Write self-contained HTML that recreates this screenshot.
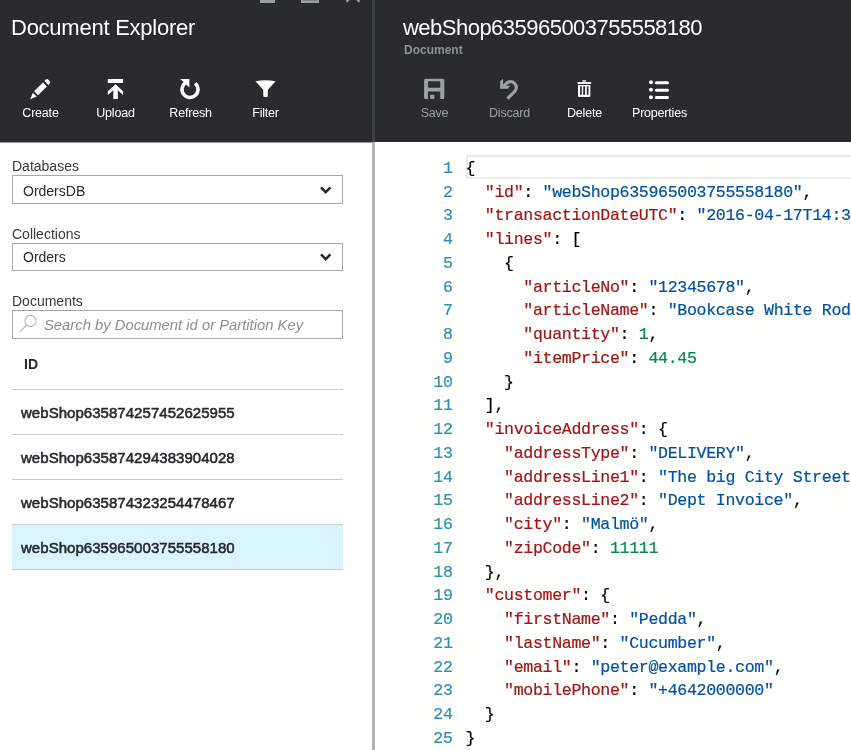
<!DOCTYPE html>
<html><head><meta charset="utf-8">
<style>
*{margin:0;padding:0;box-sizing:border-box}
html,body{width:851px;height:750px;overflow:hidden;background:#fff;font-family:"Liberation Sans",sans-serif}
.abs,.lbl,.rowt,#code{will-change:transform}
.abs{position:absolute;white-space:nowrap}
#hdr{position:absolute;left:0;top:0;width:851px;height:142px;background:#282c30;box-shadow:0 1px 0 #9a9a9a}
#div1{position:absolute;left:372px;top:0;width:3px;height:142px;background:#3c4147}
#div2{position:absolute;left:372px;top:142px;width:3px;height:608px;background:#b3b3b3}
.title{font-size:22px;line-height:22px;color:#fff}
.tb{position:absolute;top:0;width:75px;height:142px}
.tb svg{position:absolute;left:0;top:0}
.lbl{position:absolute;top:107.2px;left:0;width:75px;text-align:center;font-size:12.5px;line-height:12.5px;color:#fff;letter-spacing:-0.2px}
.dis{color:#9ca0a4}
.flabel{font-size:14px;line-height:14px;color:#3b3b3b}
.box{position:absolute;left:12px;width:331px;border:1px solid #a9a9a9;background:#fff}
.row{position:absolute;left:12px;width:331px;height:46px;border-top:1px solid #cbcbcb;border-bottom:1px solid #cbcbcb}
.rowt{position:absolute;left:9px;top:14.7px;font-size:15px;line-height:15px;color:#262a2f;letter-spacing:0.04px;-webkit-text-stroke:0.55px #262a2f}
#code{position:absolute;left:0;top:155px;width:851px}
.ln{position:relative;height:23.75px;font-family:"Liberation Mono",monospace;font-size:16.6px;line-height:23.75px;white-space:pre;letter-spacing:-0.33px;-webkit-text-stroke:0.2px currentColor}
.num{position:absolute;left:372.6px;width:80px;text-align:right;color:#2b91af;top:1.8px}
.txt{position:absolute;left:465.5px;top:1.8px;color:#000}
.k{color:#a31515}.s{color:#0451a5}.n{color:#098658}
#cur{position:absolute;left:466px;top:155px;width:400px;height:24px;border:2px solid #ebebeb;border-right:none;background:#fffffe}
</style></head><body>
<div id="hdr"></div>
<div id="div1"></div>
<div id="div2"></div>
<div style="position:absolute;left:375px;top:142px;width:476px;height:608px;background:#fffffe"></div>

<!-- window buttons -->
<div class="abs" style="left:260px;top:0;width:15px;height:3px;background:#9a9fa3"></div>
<div class="abs" style="left:301px;top:-12px;width:18px;height:15px;border:2px solid #9a9fa3;border-width:0 2px 2px 2px;background:#7e8388"></div>
<svg class="abs" style="left:340px;top:0" width="26" height="6"><path d="M13 -5 L6.5 1.8 M13 -5 L19.5 1.8" stroke="#9a9fa3" stroke-width="2.2" fill="none"/></svg>

<div class="abs title" style="left:11px;top:16.9px;letter-spacing:-0.25px">Document Explorer</div>

<!-- left toolbar -->
<div class="tb" style="left:3px">
  <svg width="75" height="142" viewBox="3 0 75 142">
    <g transform="translate(30.2 99.2) rotate(-45)" fill="#fff">
      <polygon points="0,0 6.5,-2.78 6.5,2.78"/>
      <rect x="8.3" y="-2.78" width="12.5" height="5.56"/>
      <path d="M22.8,-2.78 H25 A1.5 1.5 0 0 1 26.5 -1.28 V1.28 A1.5 1.5 0 0 1 25 2.78 H22.8 Z"/>
    </g>
  </svg>
  <div class="lbl">Create</div>
</div>
<div class="tb" style="left:78px">
  <svg width="75" height="142" viewBox="78 0 75 142">
    <rect x="107.8" y="79" width="15.3" height="4" fill="#fff"/>
    <polygon fill="#fff" points="115.5,84.2 123.1,91.2 123.1,95.1 117.8,90.2 117.8,98.9 113.3,98.9 113.3,90.2 107.8,95.1 107.8,91.2"/>
  </svg>
  <div class="lbl">Upload</div>
</div>
<div class="tb" style="left:153px">
  <svg width="75" height="142" viewBox="153 0 75 142">
    <path d="M195.14 83.37 A8 8 0 1 1 186 82.57" stroke="#fff" stroke-width="3.5" fill="none"/>
    <polygon fill="#fff" points="180.2,79 189.4,79 189.4,87.6"/>
  </svg>
  <div class="lbl">Refresh</div>
</div>
<div class="tb" style="left:228px">
  <svg width="75" height="142" viewBox="228 0 75 142">
    <path fill="#fff" d="M255.4 81.2 Q265.5 79.4 275.6 81.2 L268.6 89 Q267.8 89.8 267.8 90.8 V96.2 Q267.8 97 267 97 H264.1 Q263.3 97 263.3 96.2 V90.8 Q263.3 89.8 262.5 89 Z"/>
  </svg>
  <div class="lbl">Filter</div>
</div>

<!-- right header -->
<div class="abs title" style="left:403px;top:16.9px;letter-spacing:-0.52px">webShop635965003755558180</div>
<div class="abs" style="left:403.6px;top:43.8px;font-size:12px;line-height:12px;font-weight:bold;color:#8c9196">Document</div>

<div class="tb" style="left:397px">
  <svg width="75" height="142" viewBox="397 0 75 142">
    <path fill="#9ca0a4" fill-rule="evenodd" d="M425.6 78.7 H442.8 Q444.3 78.7 444.3 80.2 V97.4 Q444.3 98.9 442.8 98.9 H440.3 V91.6 H428 V98.9 H425.6 Q424.1 98.9 424.1 97.4 V80.2 Q424.1 78.7 425.6 78.7 Z M429 81.2 Q428 81.2 428 82.2 V86.7 Q428 87.7 429 87.7 H439.3 Q440.3 87.7 440.3 86.7 V82.2 Q440.3 81.2 439.3 81.2 Z"/>
    <rect x="430.1" y="94.8" width="4.3" height="4.1" fill="#9ca0a4"/>
  </svg>
  <div class="lbl dis">Save</div>
</div>
<div class="tb" style="left:472px">
  <svg width="75" height="142" viewBox="472 0 75 142">
    <path d="M503.6 86.3 L506.43 83.43 A5.75 5.75 0 1 1 514.57 91.57 L507.4 98.6" stroke="#9ca0a4" stroke-width="3.3" fill="none"/>
    <polygon fill="#9ca0a4" points="500.1,88.8 500.1,81.2 503.1,78.7 503.1,85.8 510.3,85.8 507.7,88.8"/>
  </svg>
  <div class="lbl dis">Discard</div>
</div>
<div class="tb" style="left:547px">
  <svg width="75" height="142" viewBox="547 0 75 142">
    <rect x="582.3" y="80" width="3.7" height="2.2" fill="#b8bbbe"/>
    <rect x="577.5" y="82.1" width="13.6" height="1.9" fill="#fff"/>
    <path fill="#fff" fill-rule="evenodd" d="M578 84.9 H590.3 V96 Q590.3 97 589.3 97 H579 Q578 97 578 96 Z M580.1 86.2 V94.8 H581.8 V86.2 Z M583.2 86.2 V94.8 H585.1 V86.2 Z M586.8 86.2 V94.8 H588.5 V86.2 Z"/>
  </svg>
  <div class="lbl">Delete</div>
</div>
<div class="tb" style="left:622px">
  <svg width="75" height="142" viewBox="622 0 75 142">
    <circle cx="651" cy="82.3" r="2" fill="#fff"/>
    <circle cx="651" cy="89.8" r="2" fill="#fff"/>
    <circle cx="651" cy="97.2" r="2" fill="#fff"/>
    <path d="M656.3 82.7 H667.5 M656.3 90.2 H667.5 M656.3 97.6 H667.5" stroke="#fff" stroke-width="3" stroke-linecap="round"/>
  </svg>
  <div class="lbl">Properties</div>
</div>

<!-- left panel -->
<div class="abs flabel" style="left:11.9px;top:159.1px">Databases</div>
<div class="box" style="top:175px;height:29px"></div>
<div class="abs" style="left:23.3px;top:184.1px;font-size:14px;line-height:14px;color:#2a2a2a">OrdersDB</div>
<svg class="abs" style="left:315px;top:180px" width="20" height="20"><path d="M6 7.4 L10.7 12.2 L15.4 7.4" stroke="#252a2f" stroke-width="2.4" fill="none"/></svg>

<div class="abs flabel" style="left:11.9px;top:226.9px">Collections</div>
<div class="box" style="top:243px;height:28px"></div>
<div class="abs" style="left:23.3px;top:250.3px;font-size:14px;line-height:14px;color:#2a2a2a">Orders</div>
<svg class="abs" style="left:315px;top:247px" width="20" height="20"><path d="M6 7.4 L10.7 12.2 L15.4 7.4" stroke="#252a2f" stroke-width="2.4" fill="none"/></svg>

<div class="abs flabel" style="left:11.9px;top:294.1px">Documents</div>
<div class="box" style="top:310px;height:29px"></div>
<svg class="abs" style="left:12px;top:310px" width="40" height="29">
  <circle cx="18.5" cy="11" r="5.6" stroke="#b4b4b4" stroke-width="1.1" fill="none"/>
  <path d="M14.6 15 L7.8 22.2" stroke="#b4b4b4" stroke-width="1.1"/>
</svg>
<div class="abs" style="left:44.2px;top:317.7px;font-size:14.8px;line-height:14.8px;font-style:italic;color:#8e8e8e">Search by Document id or Partition Key</div>

<div class="abs" style="left:23.8px;top:357.1px;font-size:14px;line-height:14px;font-weight:bold;color:#2a2a2a">ID</div>

<div class="row" style="top:389px;border-bottom:none"><div class="rowt">webShop635874257452625955</div></div>
<div class="row" style="top:434px;border-bottom:none"><div class="rowt">webShop635874294383904028</div></div>
<div class="row" style="top:479px;border-bottom:none"><div class="rowt">webShop635874323254478467</div></div>
<div class="row" style="top:524px;background:#d9f4fd"><div class="rowt">webShop635965003755558180</div></div>

<!-- editor -->
<div id="cur"></div>
<div id="code">
<div class="ln"><span class="num">1</span><span class="txt">{</span></div>
<div class="ln"><span class="num">2</span><span class="txt">  <span class="k">"id"</span>: <span class="s">"webShop635965003755558180"</span>,</span></div>
<div class="ln"><span class="num">3</span><span class="txt">  <span class="k">"transactionDateUTC"</span>: <span class="s">"2016-04-17T14:30:00"</span>,</span></div>
<div class="ln"><span class="num">4</span><span class="txt">  <span class="k">"lines"</span>: [</span></div>
<div class="ln"><span class="num">5</span><span class="txt">    {</span></div>
<div class="ln"><span class="num">6</span><span class="txt">      <span class="k">"articleNo"</span>: <span class="s">"12345678"</span>,</span></div>
<div class="ln"><span class="num">7</span><span class="txt">      <span class="k">"articleName"</span>: <span class="s">"Bookcase White Rod"</span>,</span></div>
<div class="ln"><span class="num">8</span><span class="txt">      <span class="k">"quantity"</span>: <span class="n">1</span>,</span></div>
<div class="ln"><span class="num">9</span><span class="txt">      <span class="k">"itemPrice"</span>: <span class="n">44.45</span></span></div>
<div class="ln"><span class="num">10</span><span class="txt">    }</span></div>
<div class="ln"><span class="num">11</span><span class="txt">  ],</span></div>
<div class="ln"><span class="num">12</span><span class="txt">  <span class="k">"invoiceAddress"</span>: {</span></div>
<div class="ln"><span class="num">13</span><span class="txt">    <span class="k">"addressType"</span>: <span class="s">"DELIVERY"</span>,</span></div>
<div class="ln"><span class="num">14</span><span class="txt">    <span class="k">"addressLine1"</span>: <span class="s">"The big City Street"</span>,</span></div>
<div class="ln"><span class="num">15</span><span class="txt">    <span class="k">"addressLine2"</span>: <span class="s">"Dept Invoice"</span>,</span></div>
<div class="ln"><span class="num">16</span><span class="txt">    <span class="k">"city"</span>: <span class="s">"Malmö"</span>,</span></div>
<div class="ln"><span class="num">17</span><span class="txt">    <span class="k">"zipCode"</span>: <span class="n">11111</span></span></div>
<div class="ln"><span class="num">18</span><span class="txt">  },</span></div>
<div class="ln"><span class="num">19</span><span class="txt">  <span class="k">"customer"</span>: {</span></div>
<div class="ln"><span class="num">20</span><span class="txt">    <span class="k">"firstName"</span>: <span class="s">"Pedda"</span>,</span></div>
<div class="ln"><span class="num">21</span><span class="txt">    <span class="k">"lastName"</span>: <span class="s">"Cucumber"</span>,</span></div>
<div class="ln"><span class="num">22</span><span class="txt">    <span class="k">"email"</span>: <span class="s">"peter@example.com"</span>,</span></div>
<div class="ln"><span class="num">23</span><span class="txt">    <span class="k">"mobilePhone"</span>: <span class="s">"+4642000000"</span></span></div>
<div class="ln"><span class="num">24</span><span class="txt">  }</span></div>
<div class="ln"><span class="num">25</span><span class="txt">}</span></div>
</div>
</body></html>
